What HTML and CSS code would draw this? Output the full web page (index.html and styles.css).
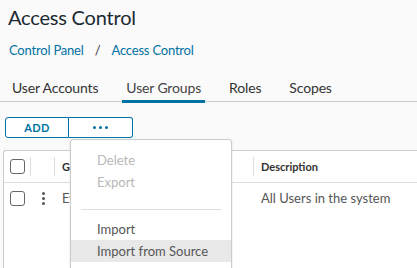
FILE: index.html
```html
<!DOCTYPE html>
<html>
<head>
<meta charset="utf-8">
<link rel="stylesheet" href="styles.css">
</head>
<body>
<div class="page">
  <h1 class="title">Access Control</h1>
  <nav class="crumbs">
    <a class="crumb">Control Panel</a>
    <span class="sep">/</span>
    <a class="crumb">Access Control</a>
  </nav>
  <div class="tabs">
    <div class="tab">User Accounts</div>
    <div class="tab active">User Groups</div>
    <div class="tab">Roles</div>
    <div class="tab">Scopes</div>
  </div>
  <div class="toolbar">
    <div class="btn-group">
      <button class="btn">ADD</button>
      <button class="btn more"><span class="dots"><i></i><i></i><i></i></span></button>
      <div class="menu">
        <div class="item disabled">Delete</div>
        <div class="item disabled">Export</div>
        <div class="divider"></div>
        <div class="item">Import</div>
        <div class="item hover">Import from Source</div>
      </div>
    </div>
  </div>
  <div class="grid">
    <div class="row head">
      <div class="cell c-check"><span class="box"></span></div>
      <div class="cell c-act"></div>
      <div class="cell c-name">Group Name</div>
      <div class="cell c-desc">Description</div>
    </div>
    <div class="row">
      <div class="cell c-check"><span class="box"></span></div>
      <div class="cell c-act"><span class="kebab"><i></i><i></i><i></i></span></div>
      <div class="cell c-name">Everyone</div>
      <div class="cell c-desc">All Users in the system</div>
    </div>
  </div>
</div>
</body>
</html>
```
FILE: styles.css
```css
* { box-sizing: border-box; }
html, body { margin: 0; padding: 0; }
body {
  background: #fafafa;
  font-family: Lato, "Open Sans", sans-serif;
  color: #333;
  width: 417px;
  height: 268px;
  overflow: hidden;
}
.title {
  margin: 0;
  padding: 4px 0 0 8px;
  font-size: 20px;
  font-weight: 400;
  line-height: 26px;
  color: #1b2a32;
  letter-spacing: -0.2px;
}
.crumbs {
  display: flex;
  align-items: center;
  padding: 11px 0 0 9px;
  font-size: 13px;
  line-height: 18px;
  color: #0072a3;
}
.crumb { color: #0072a3; letter-spacing: -0.2px; }
.sep { margin: 0 11px; color: #333; }
.tabs {
  display: flex;
  margin-top: 14px;
  border-bottom: 1px solid #ccc;
  padding-left: 8px;
}
.tab {
  font-size: 14px;
  line-height: 18px;
  padding: 6px 4px 3px 4px;
  color: #333;
  margin-right: 20px;
  border-bottom: 3px solid transparent;
  margin-bottom: -2px;
  letter-spacing: -0.15px;
}
.tab.active { border-bottom-color: #0072a3; color: #454545; }
.toolbar { padding: 14px 0 0 5px; height: 48px; }
.btn-group { position: relative; display: inline-flex; }
.btn {
  width: 64px;
  height: 21px;
  background: #fff;
  border: 1px solid #0072a3;
  color: #0072a3;
  font-family: inherit;
  font-size: 11px;
  font-weight: 700;
  letter-spacing: 0.3px;
  padding: 0;
  display: flex;
  align-items: center;
  justify-content: center;
}
.btn:first-child { border-radius: 3px 0 0 3px; }
.btn.more { border-left: none; border-radius: 0 3px 3px 0; }
.dots { display: flex; gap: 3px; }
.dots i { width: 3px; height: 3px; border-radius: 50%; background: #0072a3; display: block; }
.menu {
  position: absolute;
  left: 65px;
  top: 22px;
  width: 162px;
  height: 140px;
  background: #fff;
  border: 1px solid #ccc;
  border-radius: 3px;
  box-shadow: 0 1px 2px rgba(0,0,0,0.15);
  padding-top: 9px;
  z-index: 2;
}
.item {
  font-size: 13px;
  line-height: 22px;
  padding-left: 26px;
  color: #565656;
  white-space: nowrap;
}
.item.disabled { color: #b8b8b8; }
.item.hover { background: #e8e8e8; }
.divider { height: 1px; background: #ddd; margin: 16px 10px 8px 10px; }
.grid {
  margin-left: 3px;
  background: #fff;
  border: 1px solid #ccc;
  border-radius: 3px 0 0 0;
  border-right: none;
  height: 120px;
}
.row { display: flex; align-items: center; }
.row.head { height: 32px; border-bottom: 1px solid #ddd; font-size: 11px; font-weight: 700; color: #333; }
.row:not(.head) { height: 30px; font-size: 13px; color: #565656; }
.cell { height: 100%; display: flex; align-items: center; white-space: nowrap; }
.head .cell { position: relative; }
.head .c-check::after, .head .c-act::after, .head .c-name::after {
  content: ""; position: absolute; right: 0; top: 6px; bottom: 6px; width: 1px; background: #ddd;
}
.c-check { width: 27px; padding-left: 6px; }
.c-act { width: 24px; justify-content: center; }
.c-name { width: 199px; padding-left: 7px; }
.c-desc { padding-left: 7px; }
.box { width: 15px; height: 15px; border: 1px solid #666; border-radius: 3px; display: block; background: #fff; }
.kebab { display: flex; flex-direction: column; gap: 2px; }
.kebab i { width: 3px; height: 3px; border-radius: 50%; background: #565656; display: block; }
```
